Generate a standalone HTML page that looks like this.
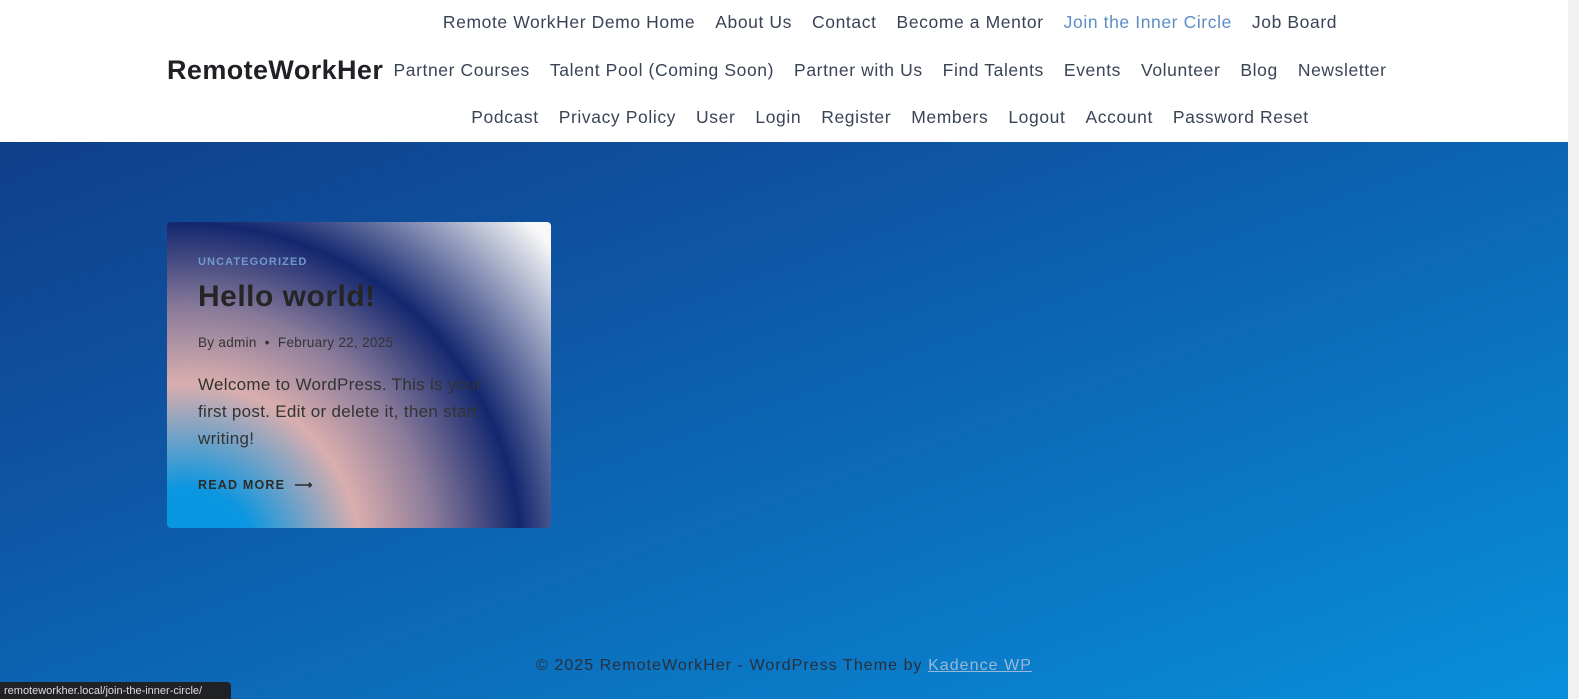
<!DOCTYPE html>
<html><head><meta charset="utf-8"><style>
*{margin:0;padding:0;box-sizing:border-box}
html,body{width:1579px;height:699px;overflow:hidden}
body{font-family:"Liberation Sans",sans-serif;background:linear-gradient(160deg,#12357f 0%,#0d5aa8 45%,#0890dc 100%);position:relative}
header{position:absolute;left:0;top:0;width:1568px;height:142px;background:#fff}
.logo{position:absolute;left:167px;top:55px;font-size:27px;font-weight:bold;color:#1f2124;letter-spacing:0.4px}
.nav{position:absolute;left:290px;width:1200px;display:flex;justify-content:center;gap:20px;font-size:17.5px;letter-spacing:0.6px;color:#3a4456;white-space:nowrap}
.nav span.a{color:#5b8ec7}
.sb{position:absolute;right:0;top:0;width:11px;height:699px;background:#f1f1f1}
.card{position:absolute;left:167px;top:222px;width:384px;height:306px;border-radius:4px;overflow:hidden;
background:radial-gradient(circle at 5% 110%,#0596e0 0px,#0a96e0 70px,#daaeae 175px,#8a7b9a 250px,#13276f 335px,#8c95b8 410px,#f8f8f8 480px)}
.cat{position:absolute;left:31px;top:34px;font-size:11px;font-weight:bold;letter-spacing:1.1px;color:#6f9ad0}
.t{position:absolute;left:31px;top:58px;font-size:30px;font-weight:bold;color:#252525;letter-spacing:0.5px}
.m{position:absolute;left:31px;top:113px;font-size:13.5px;color:#333;letter-spacing:0.3px}
.e{position:absolute;left:31px;top:149px;width:305px;font-size:17px;line-height:27px;color:#333;letter-spacing:0.3px}
.r{position:absolute;left:31px;top:255px;font-size:12.5px;font-weight:bold;letter-spacing:1.2px;color:#2b2b2b}
.f{position:absolute;left:0;width:1568px;top:657px;text-align:center;font-size:16px;color:#2a2f3a;letter-spacing:1.05px}
.f u{color:#9ab7d6}
.st{position:absolute;left:0;top:682px;height:17px;padding:3px 4px;background:#202124;color:#ddd;font-size:11px;border-radius:0 4px 0 0;width:231px}
</style></head><body>
<header>
<div class="logo">RemoteWorkHer</div>
<div class="nav" style="top:12px"><span>Remote WorkHer Demo Home</span><span>About Us</span><span>Contact</span><span>Become a Mentor</span><span class="a">Join the Inner Circle</span><span>Job Board</span></div>
<div class="nav" style="top:60px"><span>Partner Courses</span><span>Talent Pool (Coming Soon)</span><span>Partner with Us</span><span>Find Talents</span><span>Events</span><span>Volunteer</span><span>Blog</span><span>Newsletter</span></div>
<div class="nav" style="top:107px"><span>Podcast</span><span>Privacy Policy</span><span>User</span><span>Login</span><span>Register</span><span>Members</span><span>Logout</span><span>Account</span><span>Password Reset</span></div>
</header>
<div class="sb"></div>
<div class="card">
<div class="cat">UNCATEGORIZED</div>
<div class="t">Hello world!</div>
<div class="m">By admin &nbsp;•&nbsp; February 22, 2025</div>
<div class="e">Welcome to WordPress. This is your first post. Edit or delete it, then start writing!</div>
<div class="r">READ MORE &nbsp;⟶</div>
</div>
<div class="f">© 2025 RemoteWorkHer - WordPress Theme by <u>Kadence WP</u></div>
<div class="st">remoteworkher.local/join-the-inner-circle/</div>
</body></html>
